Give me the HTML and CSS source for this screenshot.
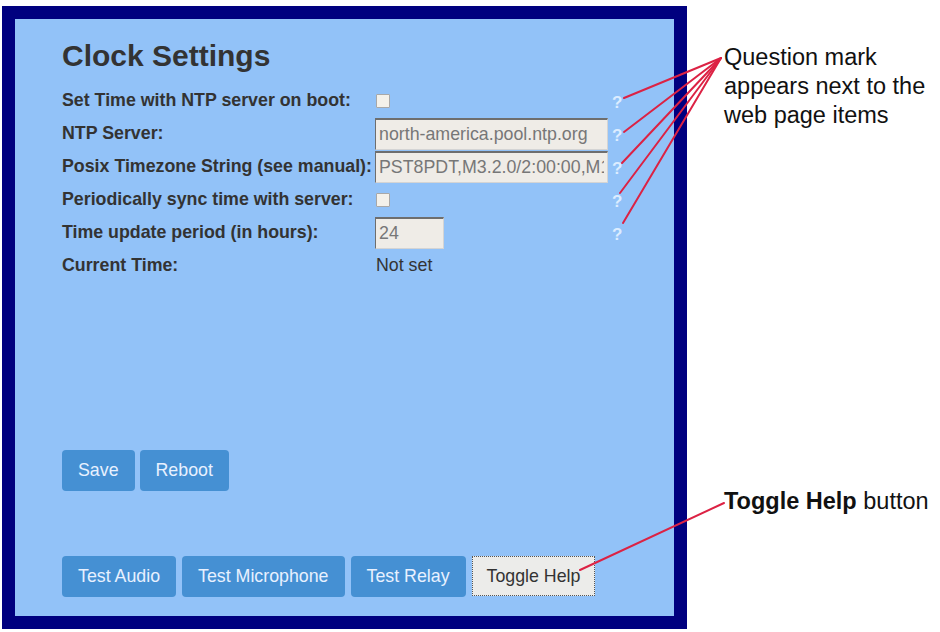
FILE: index.html
```html
<!DOCTYPE html>
<html lang="en">
<head>
    <meta charset="UTF-8">
    <meta name="viewport" content="width=device-width, initial-scale=1.0">
    <title>Clock Settings</title>
    <link rel="stylesheet" href="styles.css">
</head>
<body>
    <div class="page">
        <div class="frame">
            <h1>Clock Settings</h1>
            <div class="settings">
                <label for="ntp-boot">Set Time with NTP server on boot:</label>
                <div><input type="checkbox" id="ntp-boot"></div>
                <span class="help">?</span>

                <label for="ntp-server">NTP Server:</label>
                <div><input type="text" id="ntp-server" value="north-america.pool.ntp.org"></div>
                <span class="help">?</span>

                <label for="tz">Posix Timezone String (see manual):</label>
                <div><input type="text" id="tz" value="PST8PDT,M3.2.0/2:00:00,M11.1.0/2:00:00"></div>
                <span class="help">?</span>

                <label for="sync">Periodically sync time with server:</label>
                <div><input type="checkbox" id="sync"></div>
                <span class="help">?</span>

                <label for="period">Time update period (in hours):</label>
                <div><input type="text" id="period" class="short" value="24"></div>
                <span class="help">?</span>

                <label>Current Time:</label>
                <div class="value">Not set</div>
                <span></span>
            </div>

            <div class="actions">
                <button type="button">Save</button>
                <button type="button">Reboot</button>
            </div>

            <div class="actions tests">
                <button type="button">Test Audio</button>
                <button type="button">Test Microphone</button>
                <button type="button">Test Relay</button>
                <button type="button" class="toggle">Toggle Help</button>
            </div>
        </div>

        <div class="notes">
            <p class="note">Question mark<br>appears next to the<br>web page items</p>
            <p class="note note-toggle"><b>Toggle Help</b> button</p>
        </div>

        <!-- callout lines -->
        <svg class="callouts" width="940" height="632" viewBox="0 0 940 632">
            <g stroke="#dc2244" stroke-width="2" stroke-linecap="round">
                <line x1="721" y1="58" x2="624" y2="98"/>
                <line x1="721" y1="58" x2="624" y2="132"/>
                <line x1="721" y1="58" x2="622" y2="163"/>
                <line x1="721" y1="58" x2="620" y2="193"/>
                <line x1="721" y1="58" x2="623" y2="223"/>
                <line x1="724" y1="503" x2="580" y2="570"/>
            </g>
        </svg>
    </div>
</body>
</html>
```

FILE: styles.css
```css
body {
    margin: 0;
    font-family: "Liberation Sans", Arial, sans-serif;
    background: #fff;
    color: #333;
}
.page {
    position: relative;
    display: flex;
    width: 940px;
    height: 632px;
}
.frame {
    box-sizing: border-box;
    width: 685px;
    height: 623px;
    margin: 6px 0 0 2px;
    padding: 20px 0 0 47px;
    border: 13px solid #00007f;
    background: #92c2f8;
}
h1 {
    margin: 0 0 11px;
    font-size: 30px;
    font-weight: bold;
    color: #333;
}
.settings {
    display: grid;
    grid-template-columns: 313px 237px auto;
    grid-auto-rows: 33px;
    align-items: center;
    font-size: 17.8px;
}
.settings label {
    font-weight: bold;
    color: #333;
}
.settings input[type="text"] {
    box-sizing: border-box;
    width: 233px;
    height: 32px;
    padding: 0 3px;
    font-family: inherit;
    font-size: 17.8px;
    color: #777;
    background: #efece7;
    border: 1px solid;
    border-color: #6e6e6e #d4d4d4 #d4d4d4 #6e6e6e;
    border-top-width: 2px;
    outline: none;
}
.settings input.short {
    width: 69px;
}
.settings input[type="checkbox"] {
    appearance: none;
    display: block;
    width: 14px;
    height: 14px;
    margin: 0 0 0 1px;
    background: #f4f1ea;
    border: 1px solid #a8a8a8;
    border-radius: 1px;
}
.value {
    padding-left: 1px;
    color: #333;
}
.help {
    font-size: 17px;
    font-weight: bold;
    color: #dcecff;
    padding-top: 5px;
}
.actions {
    display: flex;
    gap: 5px;
    margin-top: 168px;
}
.tests {
    gap: 6px;
    margin-top: 65px;
}
button {
    height: 41px;
    padding: 0 16px;
    font-family: inherit;
    font-size: 17.8px;
    color: #e8f1ff;
    background: #4590d3;
    border: none;
    border-radius: 4px;
    cursor: pointer;
}
button.toggle {
    height: 40px;
    padding: 0 14px;
    color: #333;
    background: #ececea;
    border: 1px dotted #555;
    border-radius: 0;
}
.notes {
    display: flex;
    flex-direction: column;
    margin-left: 37px;
    padding-top: 43px;
}
.note {
    margin: 0;
    font-size: 23.5px;
    line-height: 29px;
    color: #111;
}
.note-toggle {
    margin-top: 357px;
}
.callouts {
    position: absolute;
    top: 0;
    left: 0;
    pointer-events: none;
}
```
